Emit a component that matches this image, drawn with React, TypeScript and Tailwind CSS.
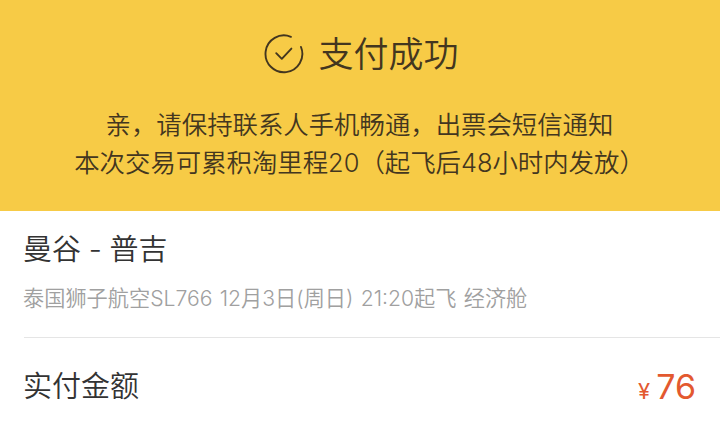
import { useId } from "react";

const FONT = "font-['Inter','Noto_Sans_CJK_SC',sans-serif]";

function SuccessIcon() {
  return (
    <svg
      className="h-10 w-10 shrink-0"
      viewBox="0 0 40 40"
      fill="none"
      stroke="currentColor"
      strokeWidth="1.9"
      strokeLinecap="round"
      strokeLinejoin="round"
    >
      <path d="M37 13A18.4 18.4 0 1 1 26.9 2.8" />
      <path d="M12.2 19.2L17.8 24.8L27.4 14.6" />
    </svg>
  );
}

export default function App() {
  const titleId = useId();

  return (
    <main
      aria-labelledby={titleId}
      className={`${FONT} h-[431px] w-[720px] overflow-hidden bg-white font-[350] text-[#333333]`}
    >
      <section className="flex h-[211px] flex-col items-center bg-[#f7cb46] pt-[34px] text-[#43361f]">
        <div className="ml-[3px] flex h-10 items-center gap-[14px]">
          <SuccessIcon />
          <h1 id={titleId} className="text-[35px] leading-10">
            支付成功
          </h1>
        </div>
        <div className="mt-8 -ml-px text-center text-[25.4px] leading-[38px]">
          <p>亲，请保持联系人手机畅通，出票会短信通知</p>
          <p>本次交易可累积淘里程20（起飞后48小时内发放）</p>
        </div>
      </section>

      <section className="ml-6 h-[127px] border-b border-[#e5e5e5] pt-5">
        <h2 className="-ml-px text-[29px] leading-[38px] [word-spacing:-0.5px]">
          曼谷 - 普吉
        </h2>
        <p className="-ml-px mt-[14px] text-[21.2px] leading-[30px] text-[#a0a0a0] [word-spacing:1.3px]">
          泰国狮子航空SL766 12月3日(周日) 21:20起飞 经济舱
        </p>
      </section>

      <section className="flex h-24 items-center justify-between pr-6 pl-[23px]">
        <span className="pt-0.5 text-[29px]">实付金额</span>
        <span className="flex items-baseline gap-[6px] font-normal text-[#e3592f]">
          <span className="text-[22px]">¥</span>
          <span className="text-[34px]">76</span>
        </span>
      </section>
    </main>
  );
}
